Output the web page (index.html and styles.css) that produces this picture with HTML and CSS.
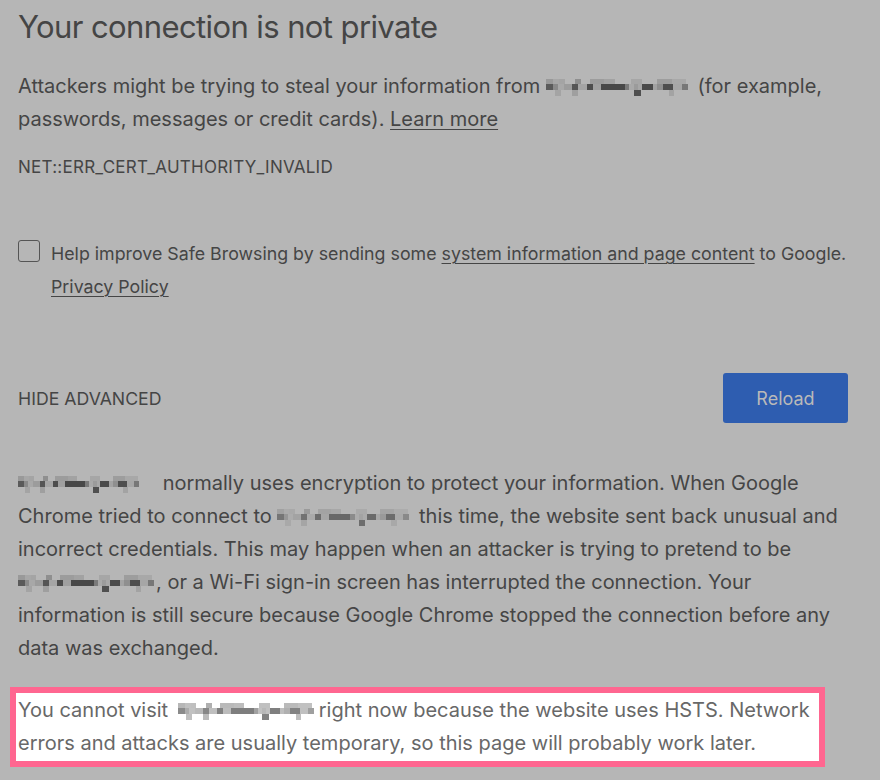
FILE: index.html
```html
<!DOCTYPE html>
<html lang="en">
<head>
<meta charset="utf-8">
<title>Privacy error</title>
<link rel="stylesheet" href="styles.css">
</head>
<body>
<main class="page">
  <h1 class="title">Your connection is not private</h1>
  <p class="lead">Attackers might be trying to steal your information from <span class="redact r-lead"></span> (for example, passwords, messages or credit cards). <a href="#" class="link">Learn more</a></p>
  <div class="code">NET::ERR_CERT_AUTHORITY_INVALID</div>

  <div class="optin">
    <span class="checkbox"></span>
    <p class="optin-text">Help improve Safe Browsing by sending some <a href="#" class="link">system information and page content</a> to Google. <a href="#" class="link">Privacy Policy</a></p>
  </div>

  <div class="actions">
    <a href="#" class="advanced">HIDE ADVANCED</a>
    <button class="reload" type="button">Reload</button>
  </div>

  <p class="details"><span class="redact r-d1"></span> normally uses encryption to protect your information. When Google Chrome tried to connect to <span class="redact r-d2 faint"></span> this time, the website sent back unusual and incorrect credentials. This may happen when an attacker is trying to pretend to be <span class="redact r-d3"></span>, or a Wi-Fi sign-in screen has interrupted the connection. Your information is still secure because Google Chrome stopped the connection before any data was exchanged.</p>

  <div class="hsts">
    <p class="hsts-text">You cannot visit <span class="redact r-hsts faint"></span>right now because the website uses HSTS. Network errors and attacks are usually temporary, so this page will probably work later.</p>
  </div>
</main>
</body>
</html>
```
FILE: styles.css
```css
* { box-sizing: border-box; }

html, body {
  margin: 0;
  background: #b6b6b6;
}

body {
  padding: 7px 0 0 18px;
  font-family: "Inter", "Liberation Sans", sans-serif;
  color: #454545;
}

.page {
  width: 832px;
}

.title {
  margin: 0;
  font-size: 31px;
  line-height: 40px;
  font-weight: 400;
  letter-spacing: -0.6px;
  color: #454545;
}

.lead,
.details,
.hsts-text {
  font-size: 20px;
  line-height: 33px;
  margin: 0;
}

.optin-text {
  margin: 0;
  font-size: 17.8px;
  line-height: 33px;
}

.lead { margin-top: 23px; }

.link {
  color: inherit;
  text-decoration: underline;
  text-underline-offset: 3px;
  text-decoration-thickness: 1px;
}

.code {
  margin-top: 19px;
  font-size: 17px;
  letter-spacing: 0.25px;
  line-height: 24px;
}

.optin {
  margin-top: 58px;
  display: flex;
  gap: 11px;
  align-items: flex-start;
}

.checkbox {
  flex: none;
  width: 22px;
  height: 22px;
  margin-top: 3px;
  border: 1px solid #555;
  border-radius: 3px;
}

.actions {
  margin-top: 70px;
  width: 830px;
  display: flex;
  justify-content: space-between;
  align-items: center;
}

.advanced {
  font-size: 17.7px;
  color: #454545;
  text-decoration: none;
}

.reload {
  width: 125px;
  height: 50px;
  border: 0;
  border-radius: 3px;
  background: #2e5db0;
  color: #b9b9b9;
  font-family: inherit;
  font-size: 18px;
}

.details { margin-top: 44px; }

.hsts {
  margin: 22px 0 0 -8px;
  width: 815px;
  border: 6px solid #ff6690;
  background: #ffffff;
  padding: 1px 2px;
}

.hsts-text { color: #686868; }

.redact {
  display: inline-block;
  height: 18px;
  vertical-align: -4px;
  background:
    linear-gradient(90deg, #999 0 5%, #a7a7a7 5% 9%, #a4a4a4 9% 13%, transparent 13% 20%, #8f8f8f 20% 24%, transparent 24% 30%, #9c9c9c 30% 40%, #a2a2a2 40% 47%, transparent 47% 58%, #a6a6a6 58% 66%, transparent 66% 76%, #9d9d9d 76% 86%, #a8a8a8 86% 96%, transparent 96%) 0 0 / 100% 5px no-repeat,
    linear-gradient(90deg, #5a5a5a 0 5%, #8a8a8a 5% 8%, #a8a8a8 8% 12%, #9c9c9c 12% 18%, #555 18% 22%, #a5a5a5 22% 28%, #4d4d4d 28% 32%, #a0a0a0 32% 38%, #484848 38% 54%, #7a7a7a 54% 57%, #a9a9a9 57% 60%, #9b9b9b 60% 63%, #a7a7a7 63% 66%, #4a4a4a 66% 73%, #a3a3a3 73% 76%, #8f8f8f 76% 80%, #4e4e4e 80% 87%, #a6a6a6 87% 93%, #777 93% 97%, transparent 97%) 0 5px / 100% 6px no-repeat,
    linear-gradient(90deg, transparent 0 6%, #a4a4a4 6% 10%, transparent 10% 18%, #9f9f9f 18% 22%, transparent 22% 60%, #4f4f4f 60% 65%, transparent 65% 84%, #a3a3a3 84% 88%, transparent 88%) 0 11px / 100% 6px no-repeat;
}

.redact.faint {
  opacity: 0.7;
}

.r-lead { width: 146px; }
.r-d1 { width: 125px; margin-right: 14px; }
.r-d2 { width: 136px; }
.r-d3 { width: 140px; margin-right: -2px; }
.r-hsts { width: 140px; margin-left: 4px; margin-right: 1px; }
```
